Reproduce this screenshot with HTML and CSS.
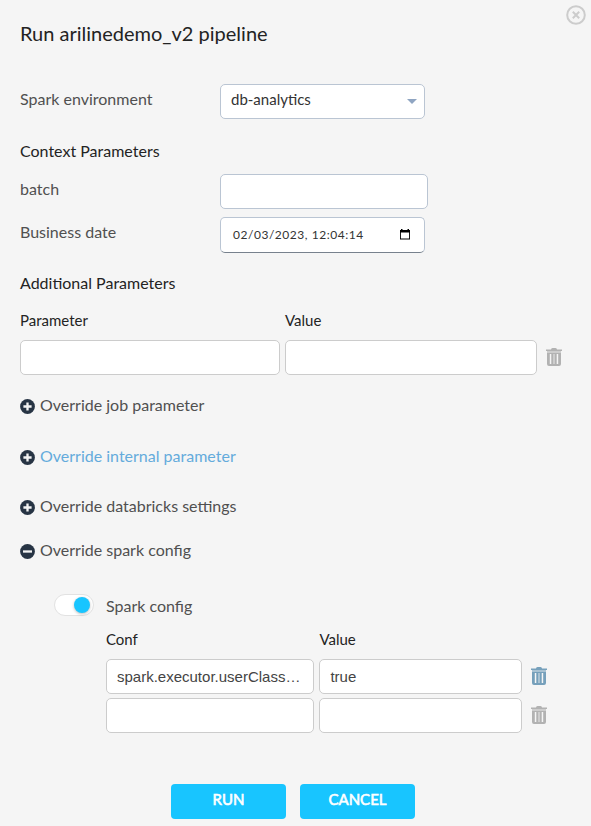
FILE: index.html
```html
<!DOCTYPE html>
<html lang="en">
<head>
<meta charset="utf-8">
<title>Run pipeline</title>
<link rel="stylesheet" href="styles.css">
</head>
<body>
<svg width="0" height="0" class="defs">
  <symbol id="trash" viewBox="0 0 16 18">
    <path d="M5 1.5Q5 0 6.5 0h3Q11 0 11 1.5h5V3H0V1.5z"/>
    <path opacity=".6" d="M1 3h14v2H1zM7 6h2v10H7z"/>
    <path fill-rule="evenodd" d="M1 5h14v11q0 2-2 2H3q-2 0-2-2zM3.8 6v10h1.5V6zM7 6v10h2V6zM10.7 6v10h1.5V6z"/>
  </symbol>
  <symbol id="plus" viewBox="0 0 15 15"><circle cx="7.5" cy="7.5" r="7.4"/><path class="sign" d="M3.4 7.5h8.2M7.5 3.4v8.2"/></symbol>
  <symbol id="minus" viewBox="0 0 15 15"><circle cx="7.5" cy="7.5" r="7.4"/><path class="sign" d="M3 7.5h9"/></symbol>
</svg>
<main class="dialog">
  <header class="header">
    <h1>Run arilinedemo_v2 pipeline</h1>
    <svg class="close" viewBox="0 0 20 20"><circle cx="10" cy="10" r="8.8"/><path d="M6.8 6.8l6.4 6.4M13.2 6.8l-6.4 6.4"/></svg>
  </header>
  <div class="row env"><span class="label">Spark environment</span>
    <div class="field select"><span class="env-name">db-analytics</span><i class="caret"></i></div></div>
  <h2 class="context">Context Parameters</h2>
  <div class="row batch"><span class="label">batch</span><div class="field batch-input"></div></div>
  <div class="row date"><span class="label">Business date</span>
    <div class="field date-input"><span class="date-text">02/03/2023, 12:04:14</span>
      <svg class="calendar" viewBox="0 0 10 11"><path d="M1 0h1.5v1h5V0H9v1h1v9.5H0V1h1zM.9 3.5v6.1h8.2V3.5z" fill-rule="evenodd"/></svg></div></div>
  <h2 class="additional">Additional Parameters</h2>
  <div class="params">
    <span class="column">Parameter</span><span class="column">Value</span><span></span>
    <div class="field"></div><div class="field"></div><svg class="trash"><use href="#trash"/></svg>
  </div>
  <div class="overrides">
    <div class="override job"><svg><use href="#plus"/></svg><span>Override job parameter</span></div>
    <div class="override internal"><svg><use href="#plus"/></svg><span>Override internal parameter</span></div>
    <div class="override bricks"><svg><use href="#plus"/></svg><span>Override databricks settings</span></div>
    <div class="override spark"><svg><use href="#minus"/></svg><span>Override spark config</span></div>
  </div>
  <section class="config">
    <div class="toggle"><i></i></div>
    <div class="config-body">
      <div class="config-title">Spark config</div>
      <div class="config-grid">
        <span class="column">Conf</span><span class="column">Value</span><span></span>
        <div class="field text">spark.executor.userClass…</div><div class="field text">true</div><svg class="trash active"><use href="#trash"/></svg>
        <div class="field"></div><div class="field"></div><svg class="trash"><use href="#trash"/></svg>
      </div>
    </div>
  </section>
  <footer><button>RUN</button><button>CANCEL</button></footer>
</main>
</body>
</html>
```
FILE: styles.css
```css
* { box-sizing: border-box; }
body { margin: 0; background: #f5f5f5; font-family: Lato, sans-serif; color: #232323; font-size: 16px; }
.defs { position: absolute; }
.dialog { width: 591px; height: 826px; padding: 0 20px; overflow: hidden; }
.header { height: 84px; display: flex; justify-content: space-between; margin-right: -15px; }
h1 { margin: 20px 0 0; font-size: 20px; line-height: 26px; font-weight: 400; }
.close { width: 20px; height: 20px; margin-top: 5px; fill: none; stroke: #ccc; stroke-width: 2; }
.row { display: flex; }
.label { width: 200px; line-height: 20px; padding-top: 5px; color: #505050; }
.field { height: 35px; border: 1px solid #ccc; border-radius: 5px; background: #fff; }
.row .field { border-color: #bac5d3; }
.env { height: 57px; }
.select { width: 205px; padding: 0 7px 0 10px; display: flex; justify-content: space-between; align-items: center; color: #333; font-size: 15px; }
.env-name { line-height: 20px; margin-bottom: 5px; }
.caret { border: 5px solid transparent; border-top-color: #8fa5c2; border-bottom: 0; }
h2 { margin: 0; font-size: 16px; font-weight: 400; line-height: 20px; }
.context { height: 33px; }
.batch { height: 43px; }
.batch-input { width: 208px; }
.date { height: 56px; }
.date-input.field { width: 205px; height: 36px; padding: 0 14px 0 12px; border-bottom-color: #77818d; display: flex; align-items: center; justify-content: space-between; color: #333; }
.date-text { font: 12px/16px Lato, sans-serif; letter-spacing: .53px; }
.calendar { width: 10px; height: 11px; margin-top: -1px; }
.additional { height: 37px; }
.params { display: grid; grid-template: 30px 35px / 260px 252px 16px; column-gap: 5px; }
.column { line-height: 20px; font-size: 15px; }
.trash { width: 16px; height: 18px; margin: 8px 0 0 4px; fill: #b2b2b2; }
.active { fill: #76a0bb; }
.overrides { padding-top: 20px; height: 219px; color: #505050; }
.override { display: flex; gap: 5px; line-height: 20px; }
.override svg { width: 15px; height: 15px; margin-top: 4px; fill: #273444; }
.sign { stroke: #f4f4f4; stroke-width: 2.3; }
.job, .internal { height: 51px; }
.internal { color: #64abdc; }
.bricks { margin-top: -1px; height: 44px; }
.config { display: flex; padding-left: 34px; height: 190px; }
.toggle { width: 40px; height: 22px; border: 1px solid #e2e2e2; border-radius: 11px; background: #fff; padding: 2px 3px 2px 2px; }
.toggle i { display: block; width: 16px; height: 16px; margin-left: auto; border-radius: 50%; background: #18c5ff; box-shadow: 0 1px 3px #0004; }
.config-body { padding: 2px 0 0 12px; }
.config-title { height: 33px; line-height: 20px; color: #505050; }
.config-grid { display: grid; grid-template: 30px 39px 35px / 208px 203px 16px; column-gap: 5.4px; }
.config-grid .trash { margin-left: 3.2px; }
.text { font: 15px/33px "Liberation Sans", sans-serif; padding: 0 10px; color: #444; white-space: nowrap; }
footer { display: flex; justify-content: center; gap: 14px; margin-right: 5px; }
button { width: 115px; height: 35px; border: 0; border-radius: 4px; background: #18c5ff; color: #fff; padding: 0 0 6px; font: 400 15px Lato, sans-serif; -webkit-text-stroke: .6px #fff; }
```
